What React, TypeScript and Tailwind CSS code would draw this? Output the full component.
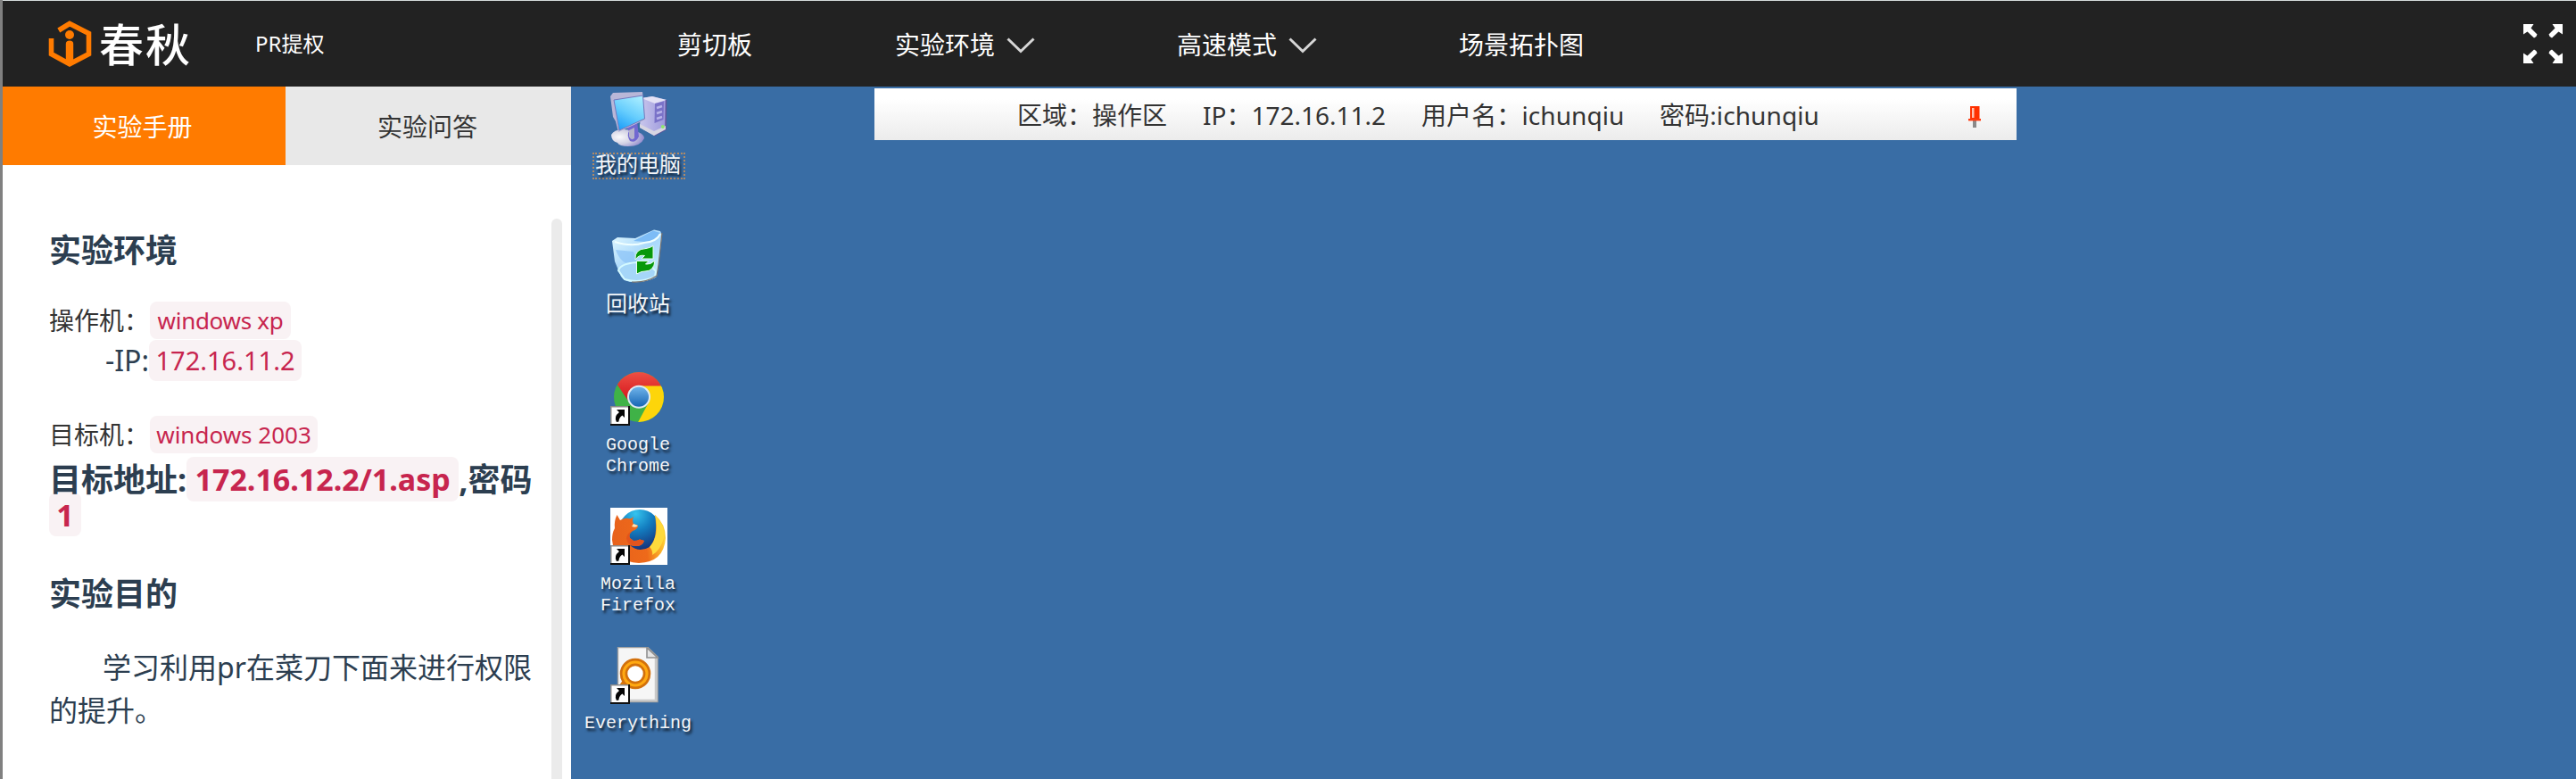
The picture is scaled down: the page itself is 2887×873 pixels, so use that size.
import React from "react";

const Chevron = ({ className = "" }: { className?: string }) => (
  <svg className={className} width="32" height="18" viewBox="0 0 32 18" fill="none">
    <path d="M1.5 1.5 L16 15.5 L30.5 1.5" stroke="#d6d6d6" strokeWidth="3" />
  </svg>
);

const LogoMark = () => (
  <svg width="50" height="54" viewBox="0 0 50 54" fill="none">
    <path d="M12.8 12 L25 4.500 L46.500 15.500 V38.500 L25 49.800 L4.500 38.500 V21" stroke="#ff7b00" strokeWidth="5.600" />
    <circle cx="25" cy="17" r="5" fill="#ff7b00" />
    <path d="M20.800 27 q0 -3.500 4.200 -3.500 t4.200 3.500 V49 H20.800 Z" fill="#ff7b00" />
  </svg>
);

const ExpandIcon = () => (
  <svg width="44" height="44" viewBox="0 0 44 44">
    {["", "translate(44 0) scale(-1 1)", "translate(0 44) scale(1 -1)", "translate(44 44) scale(-1 -1)"].map((t) => (
      <g key={t} transform={t || undefined}>
        <path d="M0 0 H11.5 L8.5 4.5 L15.5 11.5 Q15 14.5 12 15.500 L4.5 8.5 L0 11.5 Z" fill="#fff" />
      </g>
    ))}
  </svg>
);

const PinIcon = () => (
  <svg width="14" height="24" viewBox="0 0 14 24">
    <rect x="5" y="15" width="4" height="9" fill="#8a8a8a" />
    <rect x="2" y="0" width="10.5" height="14" fill="#ff3000" />
    <rect x="4" y="2" width="2.5" height="11" fill="#ffc0b0" />
    <rect x="0" y="14" width="14" height="2.4" fill="#ff3a10" />
  </svg>
);

const ShortcutBadge = () => (
  <g>
    <rect x="0" y="42" width="22" height="22" fill="#101010" />
    <rect x="0" y="42" width="20" height="20" fill="#8b8b8b" />
    <rect x="1.5" y="43.5" width="18.5" height="18.5" fill="#fff" />
    <path d="M7 46 H16 V55 L13.4 52.6 Q9.5 55.5 9.5 59.5 L7 60 Q3.5 54 10 49 Z" fill="#050505" />
  </g>
);

const ComputerIcon = () => (
  <svg width="64" height="64" viewBox="0 0 64 64">
    <defs>
      <linearGradient id="screen" x1="0.7" y1="0" x2="0.2" y2="1">
        <stop offset="0" stopColor="#a6ecff" />
        <stop offset="0.5" stopColor="#66cdfd" />
        <stop offset="1" stopColor="#1a9df8" />
      </linearGradient>
      <radialGradient id="base" cx="0.25" cy="0.45" r="0.8">
        <stop offset="0" stopColor="#fafafc" />
        <stop offset="0.5" stopColor="#d3d2e4" />
        <stop offset="1" stopColor="#8a82cc" />
      </radialGradient>
      <linearGradient id="tower" x1="0" y1="0" x2="1" y2="0">
        <stop offset="0" stopColor="#c9c7ec" />
        <stop offset="1" stopColor="#9c97dc" />
      </linearGradient>
    </defs>
    <path d="M35 9 L47 7 L63 11 L62 44 L49 51 L33 42 Z" fill="url(#tower)" />
    <path d="M35 9 L47 7 L63 11 L50 15 Z" fill="#e4e2f5" />
    <path d="M62.5 11 L62 44 L49 51" fill="none" stroke="#625299" strokeWidth="1.6" />
    <path d="M50 15 L60 12.5 L59.5 33 L49.5 37 Z" fill="#7a72c8" />
    <path d="M52 20 l6 -2 M52 26 l6 -2 M52 32 l6 -2" stroke="#b8b4ea" strokeWidth="2.4" />
    <path d="M33 38 L49 46 L62 40 L62 44 L49 51 L33 42 Z" fill="#d8d6e2" />
    <circle cx="58.8" cy="41" r="2" fill="#8fe770" />
    <path d="M1 50 Q4 44 15 44 Q38 46 38 54 Q34 63 20 63 Q10 63 8 59 Q1 57 1 50 Z" fill="url(#base)" />
    <path d="M17 40 L30 35 L32 52 Q28 60 22 57 Q18 50 21 46 Z" fill="#7168d0" />
    <path d="M21 45 L27 42 L27 54 Q23 57 21 52 Z" fill="#b6b4cc" />
    <path d="M0 7 L3 3 L36 2 L39.5 33 L9 47 L6 35 L3 30 Z" fill="#b9b7d8" />
    <path d="M4 11 L36.5 6 L38.5 32 L10 45 Z" fill="url(#screen)" stroke="#7379bf" strokeWidth="1" />
  </svg>
);

const RecycleIcon = () => (
  <svg width="64" height="64" viewBox="0 0 64 64">
    <defs>
      <linearGradient id="bin" x1="0" y1="0" x2="0.8" y2="1">
        <stop offset="0" stopColor="#e6fbff" />
        <stop offset="0.55" stopColor="#a9d8fb" />
        <stop offset="1" stopColor="#c9f0ff" />
      </linearGradient>
    </defs>
    <path d="M2 13 L8 9 L28 10 L49 .5 L56 2 L58 6 L54 40 L52 53 Q40 60 26 59 Q16 59 12 53 L5 36 Z" fill="url(#bin)" />
    <path d="M26 13 L48 1.5 L56 4 Q50 14 38 14 Z" fill="#7dbcf6" />
    <path d="M5 14 Q24 20 38 15 Q52 14 56 5" stroke="#f0ffff" strokeWidth="2" fill="none" />
    <path d="M6 23 Q14 44 30 37 L26 25 Z" fill="#8dc4f7" opacity=".75" />
    <path d="M9 46 Q12 38 30 37 Q47 41 51 47 L50 53 Q34 61 16 56 Z" fill="#a5d6f8" stroke="#d4faff" strokeWidth="2" />
    <path d="M58 4 L54 40 L52 52 Q40 60 24 59" fill="none" stroke="#79736f" strokeWidth="1.2" />
    <path
      d="M28 34 Q27 22 40 21.500 L44 20.500 L48 18.500 V33 H35 L38.500 29.500 Q32 28 28 34 Z M50 35 Q49 47 39 47 L35 47.500 L29.500 50 V35.500 H43 L39.500 39 Q45 40 50 35 Z"
      fill="#06980a"
      stroke="#e8fff0"
      strokeWidth="1"
    />
  </svg>
);

const ChromeIcon = () => (
  <svg width="64" height="64" viewBox="0 0 64 64">
    <defs>
      <linearGradient id="lens" x1="0" y1="0" x2="0" y2="1">
        <stop offset="0" stopColor="#6fb3ea" />
        <stop offset="1" stopColor="#1766b5" />
      </linearGradient>
      <linearGradient id="redArc" x1="0" y1="0" x2="0" y2="1">
        <stop offset="0" stopColor="#f0574a" />
        <stop offset="1" stopColor="#d5141b" />
      </linearGradient>
      <clipPath id="disc">
        <circle cx="32" cy="32" r="28" />
      </clipPath>
    </defs>
    <g clipPath="url(#disc)">
      <rect x="0" y="0" width="64" height="64" fill="#3fb247" />
      <path d="M32 19 H64 V64 H29 L43 38 Z" fill="#fdd50a" />
      <path d="M0 0 H64 V19.500 H32 Q22 20 20 36 L5 14 Z" fill="url(#redArc)" />
    </g>
    <circle cx="32" cy="31.700" r="13" fill="#dfeaf3" />
    <circle cx="32" cy="31.700" r="11" fill="url(#lens)" />
    <ShortcutBadge />
  </svg>
);

const FirefoxIcon = () => (
  <svg width="64" height="64" viewBox="0 0 64 64">
    <defs>
      <radialGradient id="globe" cx="0.4" cy="0.1" r="0.9">
        <stop offset="0" stopColor="#35c4ee" />
        <stop offset="0.45" stopColor="#137dc0" />
        <stop offset="1" stopColor="#142f78" />
      </radialGradient>
      <linearGradient id="fox" x1="0" y1="0.3" x2="1" y2="0.2">
        <stop offset="0" stopColor="#e8621c" />
        <stop offset="0.6" stopColor="#ee6a1a" />
        <stop offset="0.85" stopColor="#fbb02a" />
        <stop offset="1" stopColor="#ffdf3a" />
      </linearGradient>
    </defs>
    <rect width="64" height="64" fill="#fff" />
    <circle cx="33" cy="25.500" r="23.500" fill="url(#globe)" />
    <path
      d="M7.500 8 L11 14 Q17 11 20 12 Q23 13 26 10 Q24 14 26 18 L31 20 Q31 24 25 26 Q20 29 22 34 L26 37 Q30 37 33 35.500 L38 37 Q36 43 29 43 Q25 43 22 42 Q32 51 44 44 Q54 34 50 8 Q62 18 62 34 Q60 61 32 62 Q4 60 2 36 Q2 28 5 23 Q4 15 7.500 8 Z"
      fill="url(#fox)"
    />
    <path d="M50 8 Q62 20 60 34 Q56 48 47 53 Q48 48 44 44 Q56 30 50 8 Z" fill="#ffda3c" />
    <path d="M25 26 Q20 29 22 34 L26 37 Q30 37 33 35.500 L38 37 Q36 43 29 43 Q19 43 18 34 Q19 28 25 26 Z" fill="#e2541c" />
    <path d="M26 18 L31 20 Q29 23 24 21 Z" fill="#fbe3b5" />
    <ShortcutBadge />
  </svg>
);

const EverythingIcon = () => (
  <svg width="64" height="64" viewBox="0 0 64 64">
    <path d="M8.500 .5 H42 L53 11 V61.500 H8.500 Z" fill="#f6f6f6" stroke="#a0a0a0" strokeWidth="1.400" />
    <path d="M51 12 V60 H10" fill="none" stroke="#c9c9c9" strokeWidth="2.500" />
    <path d="M41 1 V12 H53 Z" fill="#e4e4e4" stroke="#8f8f8f" strokeWidth="1.600" />
    <path d="M18 38 L12 46" stroke="#d9760a" strokeWidth="7" />
    <circle cx="28" cy="30" r="13" fill="#fff" stroke="#d2700c" strokeWidth="8.500" />
    <circle cx="28" cy="30" r="13" fill="none" stroke="#ffa912" strokeWidth="3.200" />
    <ShortcutBadge />
  </svg>
);

const Code = ({ className, children }: { className: string; children: React.ReactNode }) => (
  <code
    className={
      "flex shrink-0 items-center justify-center whitespace-nowrap rounded-lg bg-[#f9f2f4] font-['Noto_Sans','Noto_Sans_CJK_SC',sans-serif] leading-none text-[#c7254e] " +
      className
    }
  >
    {children}
  </code>
);

const shortcuts = [
  { icon: <ComputerIcon />, lines: ["我的电脑"], cjk: true, selected: true },
  { icon: <RecycleIcon />, lines: ["回收站"], cjk: true, selected: false },
  { icon: <ChromeIcon />, lines: ["Google", "Chrome"], cjk: false, selected: false },
  { icon: <FirefoxIcon />, lines: ["Mozilla", "Firefox"], cjk: false, selected: false },
  { icon: <EverythingIcon />, lines: ["Everything"], cjk: false, selected: false },
];

function Header() {
  return (
    <header className="flex h-24 shrink-0 items-center bg-[#222] text-[28px] leading-[42px] text-white">
      <div className="flex w-[283px] shrink-0 items-center pl-[50px]">
        <LogoMark />
        <span className="-mt-1 ml-2 whitespace-nowrap font-['Noto_Sans_CJK_SC',sans-serif] text-[50px] font-medium leading-[56px] tracking-[2px]">
          春秋
        </span>
      </div>
      <div className="w-[473px] shrink-0 whitespace-nowrap text-2xl">PR提权</div>
      <nav className="flex shrink-0 items-center pt-0.5">
        <span className="w-[244px]">剪切板</span>
        <span className="flex w-[316px] items-center">
          实验环境
          <Chevron className="ml-[13px] mt-0.5" />
        </span>
        <span className="flex w-[316px] items-center">
          高速模式
          <Chevron className="ml-[13px] mt-0.5" />
        </span>
        <span>场景拓扑图</span>
      </nav>
      <div className="ml-auto mr-[15px]">
        <ExpandIcon />
      </div>
    </header>
  );
}

function Manual() {
  return (
    <aside className="flex w-[637px] shrink-0 flex-col bg-white">
      <div className="flex h-[88px] shrink-0 text-[28px]">
        <div className="flex w-[317px] items-center justify-center bg-[#ff7b00] pr-1 pt-0.5 text-white">实验手册</div>
        <div className="flex flex-1 items-center justify-center bg-[#e8e8e8] pr-0.5 pt-0.5 text-[#333]">实验问答</div>
      </div>
      <div className="flex min-h-0 flex-1 justify-between pr-2.5">
        <div className="w-[552px] pl-[52px] pt-[72px] text-[#2c3e50]">
          <h2 className="text-4xl font-bold leading-[48px]">实验环境</h2>
          <div className="mt-[33px] flex h-[42px] items-center text-[28px] text-[#333]">
            <span className="w-[113px] whitespace-nowrap">操作机：</span>
            <Code className="h-[42px] w-[158px] text-[26px] tracking-[-0.3px]">windows xp</Code>
          </div>
          <div className="mt-px flex h-[46px] items-center text-[32px]">
            <span className="w-28 text-right">-IP:</span>
            <Code className="h-[46px] w-[171px] pb-px text-[29px]">172.16.11.2</Code>
          </div>
          <div className="mt-[39px] flex h-[42px] items-center text-[28px] text-[#333]">
            <span className="w-[113px] whitespace-nowrap">目标机：</span>
            <Code className="h-[42px] w-[188px] text-[26px]">windows 2003</Code>
          </div>
          <h2 className="mt-1 text-4xl font-bold leading-[39px]">
            <span className="flex h-[50px] items-center whitespace-nowrap">
              <span className="w-[155px]">目标地址:</span>
              <Code className="h-[50px] w-[305px] text-[34px]">172.16.12.2/1.asp</Code>
              <span>,密码</span>
            </span>
            <Code className="-mt-2.5 h-[49px] w-9 text-[34px]">1</Code>
          </h2>
          <h2 className="mt-[41px] text-4xl font-bold leading-[48px]">实验目的</h2>
          <p className="mt-[34px] w-[550px] indent-[60px] text-[32px] leading-[48px]">
            学习利用pr在菜刀下面来进行权限
            <br />
            的提升。
          </p>
        </div>
        <div className="mt-[60px] w-3 rounded-t-full bg-[#ebebeb]" />
      </div>
    </aside>
  );
}

function Desktop() {
  return (
    <main className="flex flex-1 bg-[#396da5]">
      <div className="flex w-[152px] shrink-0 flex-col pt-1">
        {shortcuts.map((s) => (
          <div key={s.lines[0]} className="flex h-[156px] shrink-0 flex-col items-center">
            {s.icon}
            <div
              className={
                "flex flex-col items-center whitespace-nowrap pr-0.5 font-['Liberation_Mono','Noto_Sans_CJK_SC',monospace] leading-6 text-[#f4f6f8] [text-shadow:2px_3px_3px_rgba(0,0,0,0.75)] " +
                (s.selected
                  ? "mt-1.5 h-[30px] w-[104px] border-2 border-dotted border-[#b08a66] pt-0.5 "
                  : "mt-2.5 ") +
                (s.cjk ? "text-2xl" : "text-xl")
              }
            >
              {s.lines.map((l) => (
                <span key={l} className="leading-6">
                  {l}
                </span>
              ))}
            </div>
          </div>
        ))}
      </div>
      <div className="ml-[188px] mt-0.5 flex h-[58px] w-[1280px] shrink-0 items-center bg-linear-to-b from-white from-20% to-[#ececec] pl-[160px] pr-10 text-[28px] text-[#333]">
        <span className="w-[208px] whitespace-nowrap pt-0.5">区域：操作区</span>
        <span className="w-[245px] whitespace-nowrap pt-0.5">IP：172.16.11.2</span>
        <span className="w-[267px] whitespace-nowrap pt-0.5 tracking-[0.1px]">用户名：ichunqiu</span>
        <span className="whitespace-nowrap pt-0.5 tracking-[0.1px]">密码:ichunqiu</span>
        <span className="ml-auto pt-1.5">
          <PinIcon />
        </span>
      </div>
    </main>
  );
}

export default function App() {
  return (
    <div className="flex h-[873px] w-[2887px] flex-col overflow-hidden border-l-[3px] border-[#808080] font-['Noto_Sans','Noto_Sans_CJK_SC',sans-serif]">
      <div className="h-px shrink-0 bg-[#d5dbdb]" />
      <Header />
      <div className="flex min-h-0 flex-1">
        <Manual />
        <Desktop />
      </div>
    </div>
  );
}
